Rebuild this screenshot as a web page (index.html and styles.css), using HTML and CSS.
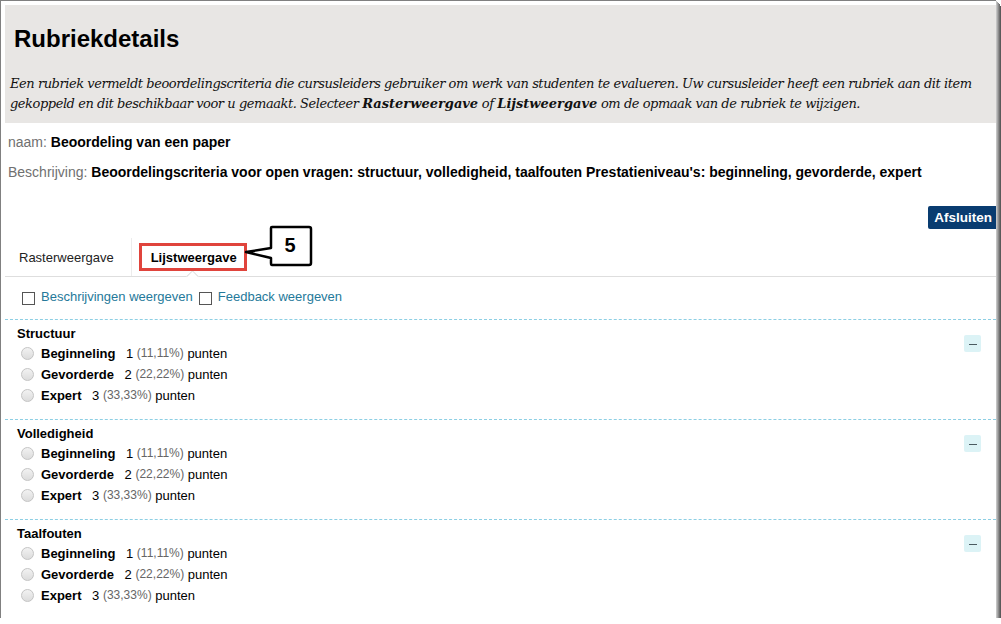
FILE: index.html
```html
<!doctype html>
<html lang="nl">
<head>
    <meta charset="UTF-8">
    <meta name="viewport" content="width=device-width, initial-scale=1.0">
    <title>Rubriekdetails</title>
    <link rel="stylesheet" href="styles.css">
</head>
<body>
    <div class="window">
        <div class="page-header">
            <h1>Rubriekdetails</h1>
            <p class="intro">Een rubriek vermeldt beoordelingscriteria die cursusleiders gebruiker om werk van studenten te evalueren. Uw cursusleider heeft een rubriek aan dit item gekoppeld en dit beschikbaar voor u gemaakt. Selecteer <b>Rasterweergave</b> of <b>Lijstweergave</b> om de opmaak van de rubriek te wijzigen.</p>
        </div>

        <div class="meta">
            <p><span class="label">naam:</span> <strong>Beoordeling van een paper</strong></p>
            <p><span class="label">Beschrijving:</span> <strong>Beoordelingscriteria voor open vragen: structuur, volledigheid, taalfouten Prestatieniveau's: beginneling, gevorderde, expert</strong></p>
        </div>

        <div class="actions">
            <button type="button">Afsluiten</button>
        </div>

        <div class="tabs">
            <a href="#" class="tab">Rasterweergave</a>
            <a href="#" class="tab active">Lijstweergave</a>
            <span class="highlight"></span>
            <svg class="callout" width="80" height="48" viewBox="0 0 80 48">
                <path d="M31 4 Q31 3 32 3 L69 3 Q71 3 71 5 L71 39 Q71 41 69 41 L32 41 Q31 41 31 39 L31 34 L6 28 L31 24 Z" fill="#fff" stroke="#000" stroke-width="2.5" stroke-linejoin="round"/>
                <text x="50" y="28" text-anchor="middle">5</text>
            </svg>
        </div>

        <div class="options">
            <label class="check"><span class="box"></span>Beschrijvingen weergeven</label>
            <label class="check"><span class="box"></span>Feedback weergeven</label>
        </div>

        <div class="criteria">
            <div class="criterion">
                <div class="levels">
                    <h3>Structuur</h3>
                    <div class="level"><span class="radio"></span><b>Beginneling</b> 1 <span class="pct">(11,11%)</span> punten</div>
                    <div class="level"><span class="radio"></span><b>Gevorderde</b> 2 <span class="pct">(22,22%)</span> punten</div>
                    <div class="level"><span class="radio"></span><b>Expert</b> 3 <span class="pct">(33,33%)</span> punten</div>
                </div>
                <button type="button" class="collapse"><span></span></button>
            </div>
            <div class="criterion">
                <div class="levels">
                    <h3>Volledigheid</h3>
                    <div class="level"><span class="radio"></span><b>Beginneling</b> 1 <span class="pct">(11,11%)</span> punten</div>
                    <div class="level"><span class="radio"></span><b>Gevorderde</b> 2 <span class="pct">(22,22%)</span> punten</div>
                    <div class="level"><span class="radio"></span><b>Expert</b> 3 <span class="pct">(33,33%)</span> punten</div>
                </div>
                <button type="button" class="collapse"><span></span></button>
            </div>
            <div class="criterion">
                <div class="levels">
                    <h3>Taalfouten</h3>
                    <div class="level"><span class="radio"></span><b>Beginneling</b> 1 <span class="pct">(11,11%)</span> punten</div>
                    <div class="level"><span class="radio"></span><b>Gevorderde</b> 2 <span class="pct">(22,22%)</span> punten</div>
                    <div class="level"><span class="radio"></span><b>Expert</b> 3 <span class="pct">(33,33%)</span> punten</div>
                </div>
                <button type="button" class="collapse"><span></span></button>
            </div>
        </div>
    </div>
</body>
</html>
```

FILE: styles.css
```css
body {
    margin: 0;
    background: #fff;
    font-family: "Liberation Sans", Arial, sans-serif;
    color: #000;
}

.window {
    box-sizing: border-box;
    width: 996px;
    height: 618px;
    border-top: 1px solid #808080;
    border-left: 1px solid #808080;
    padding: 4px 0 0 4px;
    overflow: hidden;
    box-shadow: 1px 1px 0 #c4c4c4, 2px 2px 0 #a8a8a8, 3px 3px 0 #8c8c8c, 4px 4px 0 #707070, 5px 6px 0 #5a5a5a;
}

.page-header {
    background: #e8e6e4;
    padding: 20px 5px 9px 5px;
}

.page-header h1 {
    margin: 0 0 21px 0;
    padding-left: 4px;
    font-size: 24px;
    line-height: 28px;
    font-weight: bold;
}

.intro {
    margin: 0;
    font-family: "DejaVu Serif", Georgia, serif;
    font-style: italic;
    font-size: 13px;
    line-height: 20px;
    letter-spacing: -0.45px;
    color: #111;
}

.intro b {
    letter-spacing: 0;
}

.meta {
    padding: 10px 0 0 3px;
}

.meta p {
    margin: 0 0 12px 0;
    font-size: 14px;
    line-height: 18px;
}

.meta p:last-child {
    margin-bottom: 0;
}

.meta .label {
    color: #707070;
}

.actions {
    display: flex;
    justify-content: flex-end;
    margin-top: 25px;
}

.actions button {
    height: 23px;
    padding: 0 4px 0 6px;
    border: none;
    border-radius: 2px 0 0 2px;
    background: #093c70;
    color: #fff;
    font-family: "Liberation Sans", Arial, sans-serif;
    font-size: 13.5px;
    font-weight: bold;
}

.tabs {
    position: relative;
    display: flex;
    margin-top: 9px;
    border-bottom: 1px solid #dedede;
}

.tab {
    position: relative;
    padding: 12px 17px 10px 14px;
    font-size: 13px;
    line-height: 16px;
    color: #222;
    text-decoration: none;
}

.tab:first-child {
    border-right: 1px solid #ececec;
}

.tab.active {
    padding-left: 19px;
    font-weight: bold;
    color: #000;
}

.tab.active::after {
    content: "";
    position: absolute;
    left: 50%;
    bottom: -5px;
    width: 8px;
    height: 8px;
    margin-left: -5px;
    background: #fff;
    border-top: 1px solid #dedede;
    border-left: 1px solid #dedede;
    transform: rotate(45deg);
}

.highlight {
    position: absolute;
    left: 134px;
    top: 5px;
    width: 102px;
    height: 22px;
    border: 3px solid #e0443c;
}

.callout {
    position: absolute;
    left: 235px;
    top: -14px;
}

.callout text {
    font-family: "Liberation Sans", Arial, sans-serif;
    font-size: 20px;
    font-weight: bold;
}

.options {
    display: flex;
    align-items: center;
    padding: 11px 0 14px 17px;
    border-bottom: 1px dashed #8dcfe4;
}

.check {
    display: flex;
    align-items: center;
    margin-right: 6px;
    font-size: 13px;
    line-height: 16px;
    color: #25799a;
}

.check .box {
    box-sizing: border-box;
    width: 13px;
    height: 13px;
    margin: 4px 6px 0 0;
    border: 1px solid #555;
    background: #fff;
}

.criterion {
    display: flex;
    justify-content: space-between;
    height: 99px;
    border-bottom: 1px dashed #8dcfe4;
}

.criterion:last-child {
    border-bottom: none;
}

.levels {
    padding: 6px 0 0 12px;
}

.levels h3 {
    margin: 0 0 1px 0;
    font-size: 13px;
    line-height: 16px;
    font-weight: bold;
}

.level {
    display: flex;
    align-items: center;
    padding-left: 4px;
    font-size: 13px;
    line-height: 21px;
    white-space: pre;
}

.level b {
    margin-right: 7px;
}

.level .pct {
    font-size: 12px;
    color: #666;
}

.radio {
    box-sizing: border-box;
    width: 13px;
    height: 13px;
    margin-right: 7px;
    border: 1px solid #c4c4c4;
    border-radius: 50%;
    background: linear-gradient(#f2f2f2, #dcdcdc);
}

.collapse {
    position: relative;
    width: 17px;
    height: 17px;
    margin: 15px 15px 0 0;
    padding: 0;
    border: none;
    border-radius: 2px;
    background: #dcf3f6;
}

.collapse span {
    position: absolute;
    left: 5px;
    top: 9px;
    width: 8px;
    height: 1px;
    background: #4a5a60;
}
```
